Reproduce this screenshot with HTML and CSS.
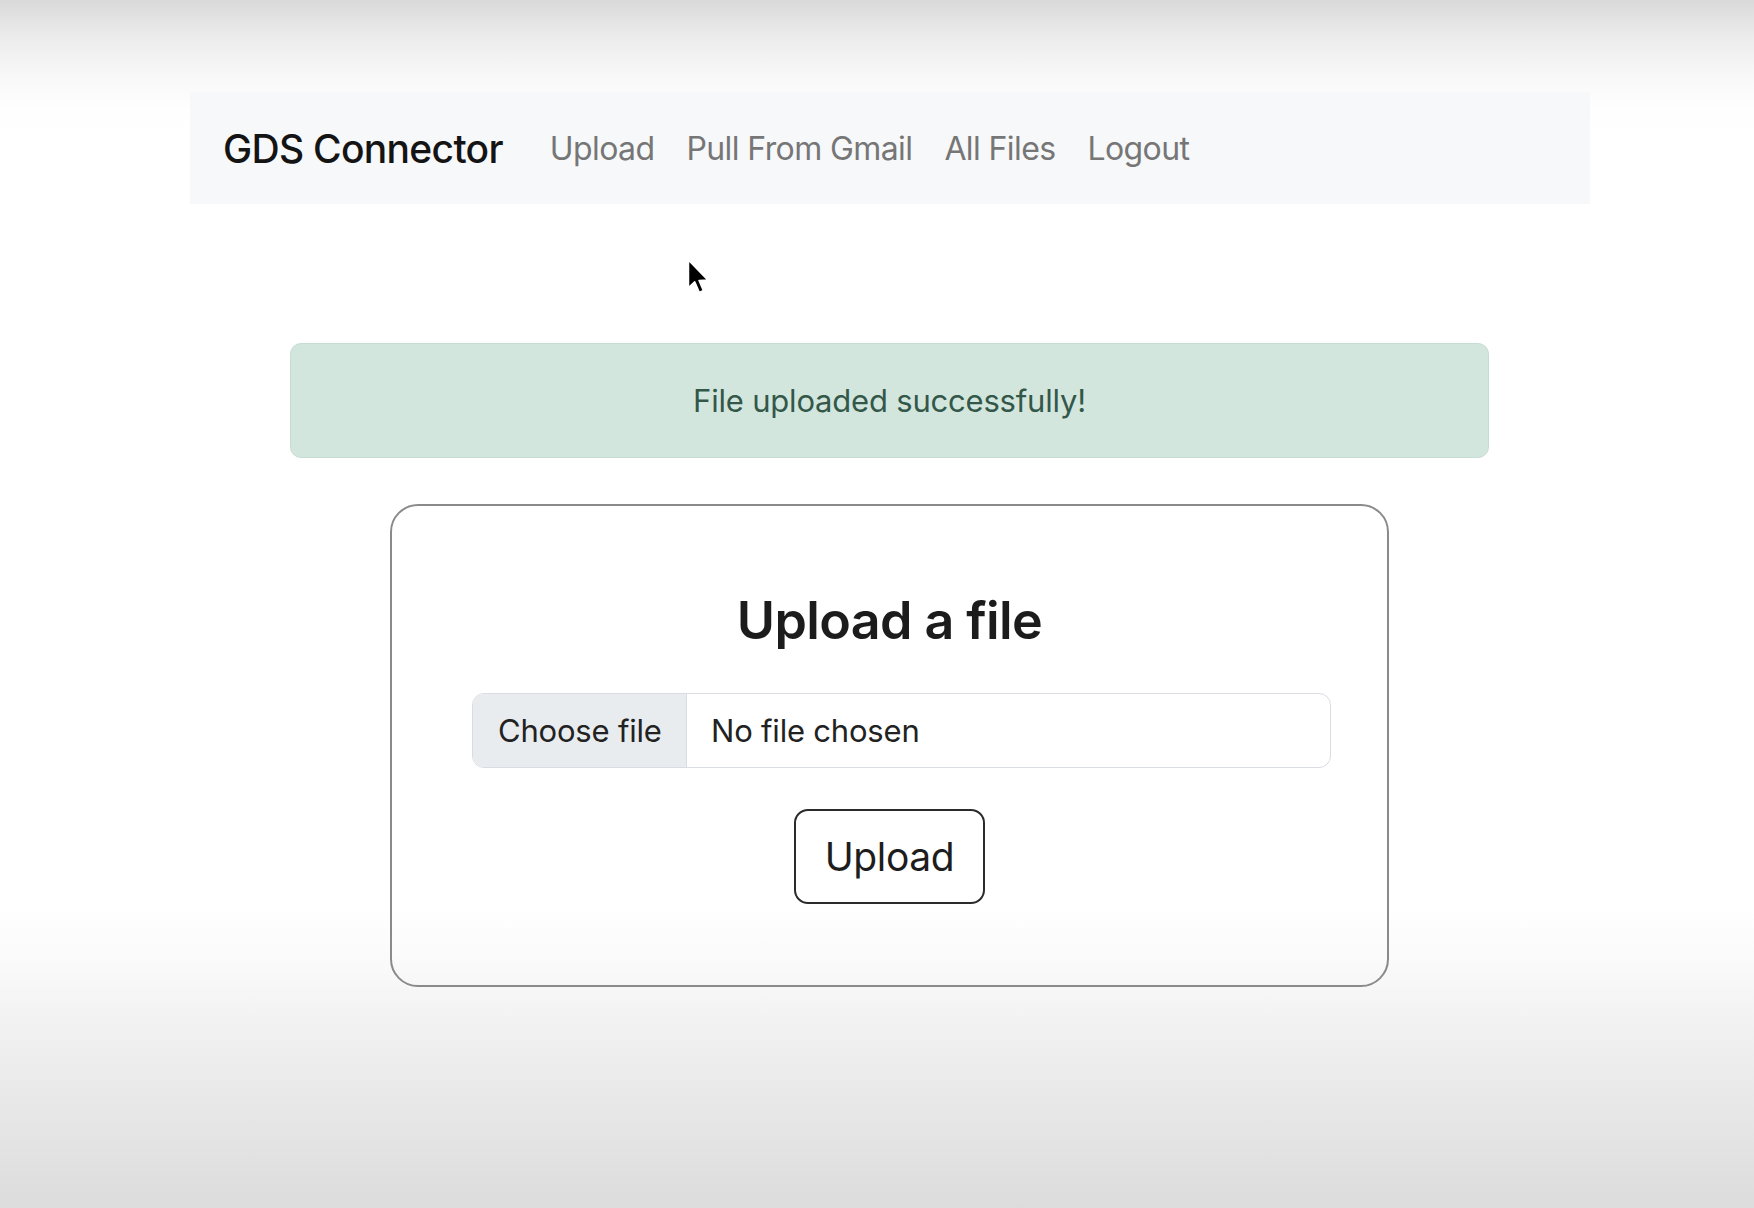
FILE: index.html
```html
<!DOCTYPE html>
<html lang="en">
<head>
<meta charset="utf-8">
<title>GDS Connector - Upload</title>
<link rel="stylesheet" href="styles.css">
</head>
<body>
<div class="frame">
  <nav class="navbar">
    <a class="brand" href="#">GDS Connector</a>
    <ul class="nav">
      <li><a class="nav-link" href="#">Upload</a></li>
      <li><a class="nav-link" href="#">Pull From Gmail</a></li>
      <li><a class="nav-link" href="#">All Files</a></li>
      <li><a class="nav-link" href="#">Logout</a></li>
    </ul>
  </nav>
  <main class="main">
    <div class="alert">File uploaded successfully!</div>
    <section class="card">
      <h3 class="title">Upload a file</h3>
      <div class="file-input">
        <span class="file-btn">Choose file</span>
        <span class="file-name">No file chosen</span>
      </div>
      <button class="btn" type="button">Upload</button>
    </section>
  </main>
</div>
<svg class="cursor" width="26" height="40" viewBox="0 0 20 32" aria-hidden="true">
  <path d="M1.5 1.5 L1.5 24 L6.6 19.2 L10.2 27.6 L13.6 26.1 L10.1 18 L17 17.6 Z" fill="#000" stroke="#fff" stroke-width="1.4" stroke-linejoin="round"/>
</svg>
</body>
</html>
```

FILE: styles.css
```css
* { box-sizing: border-box; }

html, body {
  margin: 0;
  padding: 0;
}

body {
  width: 1754px;
  height: 1208px;
  overflow: hidden;
  position: relative;
  font-family: Inter, "Liberation Sans", sans-serif;
  color: #212529;
  background: linear-gradient(to bottom,
    #d9d9d9 0px,
    #ebebeb 35px,
    #f8f8f8 75px,
    #fefefe 110px,
    #ffffff 140px,
    #ffffff 905px,
    #fafafa 960px,
    #f1f1f1 1030px,
    #e7e7e7 1110px,
    #dcdcdc 1208px);
}

.frame {
  width: 1400px;
  margin-left: 190px;
  padding-top: 92px;
}

.navbar {
  height: 112px;
  display: flex;
  align-items: center;
  padding: 0 33px;
  background: #f7f8fa;
}

.brand {
  font-size: 39px;
  font-weight: 500;
  color: #141414;
  text-decoration: none;
  margin-right: 31px;
  letter-spacing: -0.7px;
}

.nav {
  display: flex;
  list-style: none;
  margin: 0;
  padding: 0;
}

.nav-link {
  display: block;
  padding: 0 16px;
  font-size: 32px;
  color: #767676;
  text-decoration: none;
  letter-spacing: -0.6px;
}

.main {
  padding-top: 139px;
}

.alert {
  width: 1199px;
  margin-left: 100px;
  height: 115px;
  display: flex;
  align-items: center;
  justify-content: center;
  background: #d3e6dd;
  border: 1px solid #c6ddd2;
  border-radius: 11px;
  color: #33584a;
  font-size: 31px;
  letter-spacing: -0.2px;
}

.card {
  width: 999px;
  height: 483px;
  margin-left: 200px;
  margin-top: 46px;
  border: 2px solid #8a8a8a;
  border-radius: 28px;
  display: flex;
  flex-direction: column;
  align-items: center;
  padding-top: 84px;
}

.title {
  margin: 0;
  font-size: 52px;
  line-height: 1.2;
  font-weight: 600;
  color: #1c1c1c;
  letter-spacing: -0.6px;
}

.file-input {
  align-self: flex-start;
  margin-left: 80px;
  margin-top: 41px;
  width: 859px;
  height: 75px;
  display: flex;
  border: 1.5px solid #d9dce2;
  border-radius: 12px;
  overflow: hidden;
  font-size: 31px;
  color: #222;
}

.file-btn {
  width: 214px;
  display: flex;
  align-items: center;
  padding-left: 25px;
  background: #e9ecef;
  border-right: 1.5px solid #d9dce2;
  letter-spacing: -0.2px;
}

.file-name {
  display: flex;
  align-items: center;
  padding-left: 24px;
  letter-spacing: -0.2px;
}

.btn {
  margin-top: 41px;
  width: 191px;
  height: 95px;
  background: #fff;
  border: 2px solid #2b2b2b;
  border-radius: 14px;
  font-family: Inter, "Liberation Sans", sans-serif;
  font-size: 39px;
  color: #1d1d1d;
  letter-spacing: -0.4px;
  padding: 0;
}

.cursor {
  position: absolute;
  left: 686px;
  top: 258px;
}
```
